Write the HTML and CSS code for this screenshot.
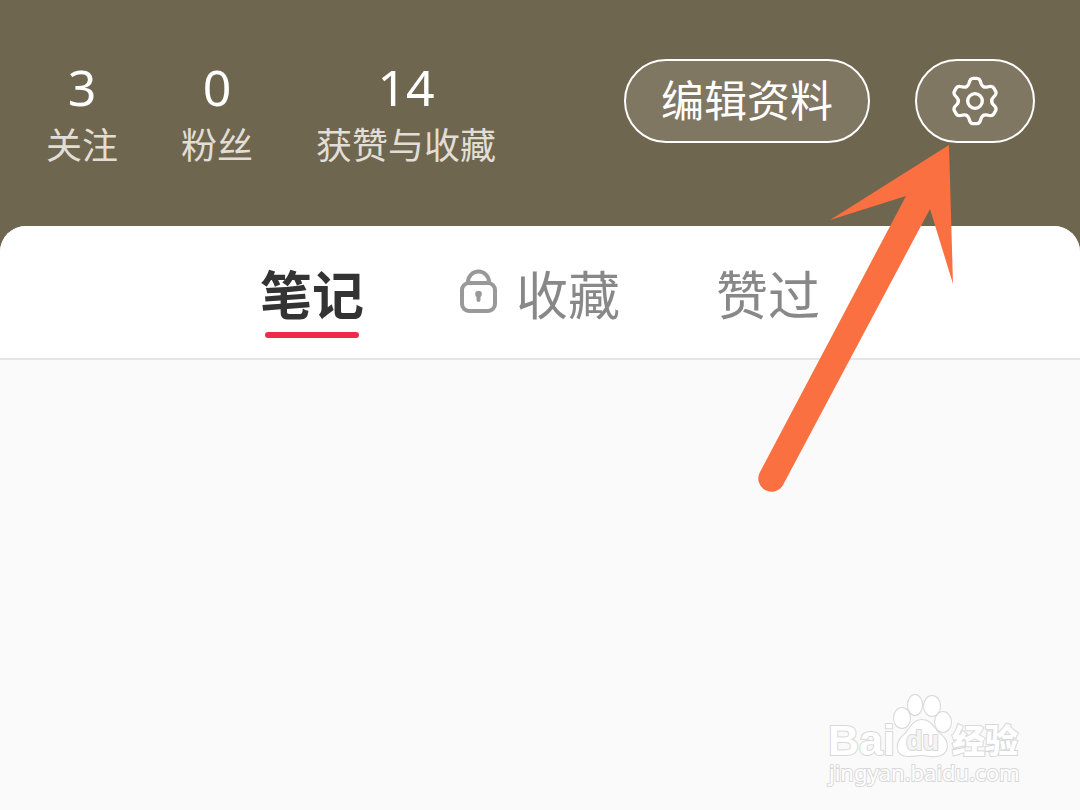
FILE: index.html
```html
<!DOCTYPE html>
<html lang="zh-CN">
<head>
    <meta charset="UTF-8">
    <meta name="viewport" content="width=device-width, initial-scale=1.0">
    <title>个人主页</title>
    <link rel="stylesheet" href="styles.css">
</head>
<body>
    <div class="page">
        <header class="profile">
            <ul class="stats">
                <li><strong>3</strong><span>关注</span></li>
                <li><strong>0</strong><span>粉丝</span></li>
                <li><strong>14</strong><span>获赞与收藏</span></li>
            </ul>
            <div class="actions">
                <button class="pill edit" type="button">编辑资料</button>
                <button class="pill settings" type="button" aria-label="设置">
                    <svg class="gear" viewBox="-75 -75 150 150">
                        <defs>
                            <path id="tooth" d="M-25-43.3Q-20-46-18-53C-16-62-13-68-6-68H6C13-68 16-62 18-53Q20-46 25-43.3"/>
                        </defs>
                        <use href="#tooth"/>
                        <use href="#tooth" transform="rotate(60)"/>
                        <use href="#tooth" transform="rotate(120)"/>
                        <use href="#tooth" transform="rotate(180)"/>
                        <use href="#tooth" transform="rotate(240)"/>
                        <use href="#tooth" transform="rotate(300)"/>
                        <circle r="22"/>
                    </svg>
                </button>
            </div>
        </header>

        <main class="content">
            <nav class="tabs">
                <button class="tab active" type="button">笔记</button>
                <button class="tab" type="button">
                    <svg class="lock" viewBox="0 0 38 46">
                        <path d="M8 14v-1a10.500 10.500 0 0 1 21 0v1"/>
                        <rect x="2" y="14" width="33" height="28" rx="7"/>
                        <circle class="hole" cx="18.500" cy="25" r="3.300"/>
                        <path d="M18.500 26v5"/>
                    </svg>
                    收藏
                </button>
                <button class="tab" type="button">赞过</button>
            </nav>
        </main>

        <!-- arrow pointing at the settings button -->
        <svg class="arrow" viewBox="0 0 124 348">
            <path d="M119 0L0 75L76 51L-70 327A13 13 0 0 0-47 340L100 64L123 139Z"/>
        </svg>

        <svg class="watermark" viewBox="0 0 210 100">
            <text class="latin" x="8" y="65">Bai</text>
            <g>
                <ellipse cx="82" cy="28" rx="8" ry="10"/>
                <ellipse cx="95" cy="15" rx="7" ry="10"/>
                <ellipse cx="112" cy="16" rx="8" ry="10"/>
                <ellipse cx="123" cy="32" rx="8" ry="10"/>
                <path d="M102 30C92 30 90 40 84 45C76 51 74 66 88 66C94 66 98 65 102 65C108 65 110 67 117 66C130 64 129 51 121 45C114 40 112 30 102 30Z"/>
            </g>
            <text class="du" x="86" y="60">du</text>
            <text class="cjk" x="132" y="63">经验</text>
            <text class="site" x="9" y="91">jingyan.baidu.com</text>
        </svg>
    </div>
</body>
</html>
```
FILE: styles.css
```css
* {
    box-sizing: border-box;
    margin: 0;
    padding: 0;
}

body {
    font-family: "Noto Sans CJK SC", sans-serif;
    background-color: #fafafa;
}

button {
    font-family: inherit;
    border: none;
    background: none;
    cursor: pointer;
}

.page {
    position: relative;
    display: flex;
    flex-direction: column;
    min-height: 100vh;
    overflow: hidden;
    background: #6f664f;
}

/* profile header */
.profile {
    display: flex;
    justify-content: space-between;
    align-items: flex-start;
    padding: 59px 45px 55px 46px;
}

.stats {
    display: flex;
    gap: 63px;
    list-style: none;
}

.stats li {
    display: flex;
    flex-direction: column;
    align-items: center;
    color: #fff;
}

.stats strong {
    font-family: "Noto Sans", sans-serif;
    font-size: 50px;
    font-weight: 400;
    line-height: 56px;
}

.stats span {
    font-size: 36px;
    line-height: 56px;
    color: #e2ded6;
}

.actions {
    display: flex;
    gap: 45px;
}

.pill {
    display: flex;
    align-items: center;
    justify-content: center;
    height: 84px;
    border: 2px solid #fff;
    border-radius: 42px;
    background-color: #807763;
    color: #fff;
}

.edit {
    padding: 0 35px 6px;
    font-size: 43px;
}

.settings {
    width: 120px;
}

.gear {
    width: 50px;
    height: 50px;
    fill: none;
    stroke: #fff;
    stroke-width: 10;
    stroke-linecap: round;
}

/* white card with the tabs */
.content {
    flex: 1;
    overflow: hidden;
    border-radius: 26px 26px 0 0;
    background-color: #fafafa;
}

.tabs {
    display: flex;
    justify-content: center;
    gap: 96px;
    height: 134px;
    border-bottom: 2px solid #e6e6e6;
    background-color: #fff;
}

.tab {
    position: relative;
    display: flex;
    align-items: center;
    gap: 18px;
    height: 132px;
    font-size: 52px;
    color: #888;
}

.active {
    font-weight: bold;
    color: #333;
}

.active::after {
    content: "";
    position: absolute;
    left: 5px;
    right: 5px;
    top: 106px;
    height: 6px;
    border-radius: 3px;
    background-color: #f2294b;
}

.lock {
    width: 38px;
    height: 46px;
    fill: none;
    stroke: #999;
    stroke-width: 4;
    stroke-linecap: round;
}

.hole {
    fill: #999;
    stroke: none;
}

.arrow {
    position: absolute;
    top: 145px;
    right: 126px;
    width: 124px;
    height: 348px;
    overflow: visible;
    fill: #fa7041;
    pointer-events: none;
}

/* watermark */
.watermark {
    position: absolute;
    right: 50px;
    bottom: 20px;
    width: 210px;
    height: 100px;
    fill: #fff;
    stroke: #d8d8d8;
    stroke-width: 2;
    paint-order: stroke;
    pointer-events: none;
}

.latin {
    font: bold 43px "Liberation Sans", sans-serif;
}

.du {
    font: bold 27px "Liberation Sans", sans-serif;
    fill: #f4f4f4;
}

.cjk {
    font: 900 33px "Noto Sans CJK SC", sans-serif;
}

.site {
    font: 22px "Noto Sans", sans-serif;
}
```
